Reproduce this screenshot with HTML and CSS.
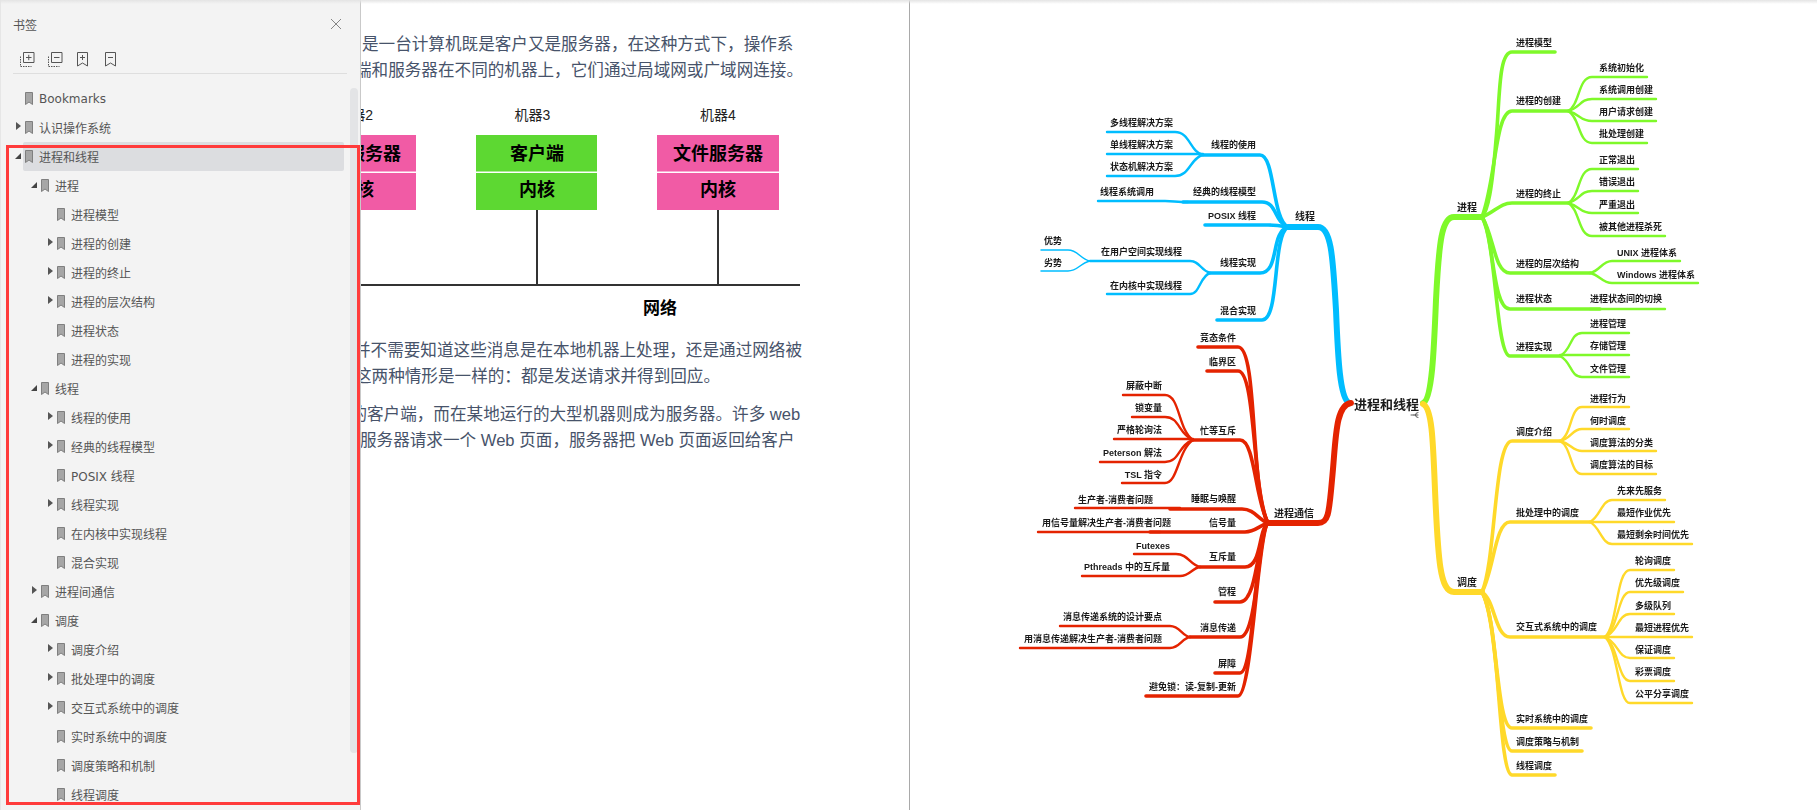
FILE: index.html
```html
<!DOCTYPE html>
<html lang="zh-CN">
<head>
<meta charset="utf-8">
<title>书签</title>
<link rel="stylesheet" href="styles.css">
</head>
<body>
<div class="app">
  <aside class="sidebar">
    <header class="side-head">
      <span>书签</span>
      <svg class="close" viewBox="0 0 10 10"><path d="M0 0L10 10M10 0L0 10"/></svg>
    </header>
    <div class="tools">
      <svg class="tool" viewBox="0 0 15 15"><path class="solid" d="M3.5.5h10.5v10h-10.5z"/><path class="dash" d="M.5 4.5v10h11"/><path class="solid" d="M6 5.5h5.500M8.750 2.800v5.400"/></svg>
      <svg class="tool" viewBox="0 0 15 15"><path class="solid" d="M3.500.5h10.500v10h-10.500z"/><path class="dash" d="M.5 4.500v10h11"/><path class="solid" d="M6 5.500h5.500"/></svg>
      <svg class="tool narrow" viewBox="0 0 11 15"><path class="solid" d="M.5.5h10v13.500l-5-3-5 3z"/><path class="solid" d="M3 5.500h5M5.500 3v5"/></svg>
      <svg class="tool narrow" viewBox="0 0 11 15"><path class="solid" d="M.5.5h10v13.500l-5-3-5 3z"/><path class="solid" d="M3 5.500h5"/></svg>
    </div>
    <nav class="tree">
      <div class="row l0"><i class="arrow"></i><div class="label"><svg class="mark" viewBox="0 0 8 13"><path d="M.5.500h7v12l-3.500-2.500-3.500 2.500z"/></svg><span>Bookmarks</span></div></div>
      <div class="row l0"><i class="arrow closed"></i><div class="label"><svg class="mark" viewBox="0 0 8 13"><path d="M.5.500h7v12l-3.500-2.500-3.500 2.500z"/></svg><span>认识操作系统</span></div></div>
      <div class="row l0"><i class="arrow open"></i><div class="label sel"><svg class="mark" viewBox="0 0 8 13"><path d="M.5.500h7v12l-3.500-2.500-3.500 2.500z"/></svg><span>进程和线程</span></div></div>
      <div class="row l1"><i class="arrow open"></i><div class="label"><svg class="mark" viewBox="0 0 8 13"><path d="M.5.500h7v12l-3.500-2.500-3.500 2.500z"/></svg><span>进程</span></div></div>
      <div class="row l2"><i class="arrow"></i><div class="label"><svg class="mark" viewBox="0 0 8 13"><path d="M.5.500h7v12l-3.500-2.500-3.500 2.500z"/></svg><span>进程模型</span></div></div>
      <div class="row l2"><i class="arrow closed"></i><div class="label"><svg class="mark" viewBox="0 0 8 13"><path d="M.5.500h7v12l-3.500-2.500-3.500 2.500z"/></svg><span>进程的创建</span></div></div>
      <div class="row l2"><i class="arrow closed"></i><div class="label"><svg class="mark" viewBox="0 0 8 13"><path d="M.5.500h7v12l-3.500-2.500-3.500 2.500z"/></svg><span>进程的终止</span></div></div>
      <div class="row l2"><i class="arrow closed"></i><div class="label"><svg class="mark" viewBox="0 0 8 13"><path d="M.5.500h7v12l-3.500-2.500-3.500 2.500z"/></svg><span>进程的层次结构</span></div></div>
      <div class="row l2"><i class="arrow"></i><div class="label"><svg class="mark" viewBox="0 0 8 13"><path d="M.5.500h7v12l-3.500-2.500-3.500 2.500z"/></svg><span>进程状态</span></div></div>
      <div class="row l2"><i class="arrow"></i><div class="label"><svg class="mark" viewBox="0 0 8 13"><path d="M.5.500h7v12l-3.500-2.500-3.500 2.500z"/></svg><span>进程的实现</span></div></div>
      <div class="row l1"><i class="arrow open"></i><div class="label"><svg class="mark" viewBox="0 0 8 13"><path d="M.5.500h7v12l-3.500-2.500-3.500 2.500z"/></svg><span>线程</span></div></div>
      <div class="row l2"><i class="arrow closed"></i><div class="label"><svg class="mark" viewBox="0 0 8 13"><path d="M.5.500h7v12l-3.500-2.500-3.500 2.500z"/></svg><span>线程的使用</span></div></div>
      <div class="row l2"><i class="arrow closed"></i><div class="label"><svg class="mark" viewBox="0 0 8 13"><path d="M.5.500h7v12l-3.500-2.500-3.500 2.500z"/></svg><span>经典的线程模型</span></div></div>
      <div class="row l2"><i class="arrow"></i><div class="label"><svg class="mark" viewBox="0 0 8 13"><path d="M.5.500h7v12l-3.500-2.500-3.500 2.500z"/></svg><span>POSIX 线程</span></div></div>
      <div class="row l2"><i class="arrow closed"></i><div class="label"><svg class="mark" viewBox="0 0 8 13"><path d="M.5.500h7v12l-3.500-2.500-3.500 2.500z"/></svg><span>线程实现</span></div></div>
      <div class="row l2"><i class="arrow"></i><div class="label"><svg class="mark" viewBox="0 0 8 13"><path d="M.5.500h7v12l-3.500-2.500-3.500 2.500z"/></svg><span>在内核中实现线程</span></div></div>
      <div class="row l2"><i class="arrow"></i><div class="label"><svg class="mark" viewBox="0 0 8 13"><path d="M.5.500h7v12l-3.500-2.500-3.500 2.500z"/></svg><span>混合实现</span></div></div>
      <div class="row l1"><i class="arrow closed"></i><div class="label"><svg class="mark" viewBox="0 0 8 13"><path d="M.5.500h7v12l-3.500-2.500-3.500 2.500z"/></svg><span>进程间通信</span></div></div>
      <div class="row l1"><i class="arrow open"></i><div class="label"><svg class="mark" viewBox="0 0 8 13"><path d="M.5.500h7v12l-3.500-2.500-3.500 2.500z"/></svg><span>调度</span></div></div>
      <div class="row l2"><i class="arrow closed"></i><div class="label"><svg class="mark" viewBox="0 0 8 13"><path d="M.5.500h7v12l-3.500-2.500-3.500 2.500z"/></svg><span>调度介绍</span></div></div>
      <div class="row l2"><i class="arrow closed"></i><div class="label"><svg class="mark" viewBox="0 0 8 13"><path d="M.5.500h7v12l-3.500-2.500-3.500 2.500z"/></svg><span>批处理中的调度</span></div></div>
      <div class="row l2"><i class="arrow closed"></i><div class="label"><svg class="mark" viewBox="0 0 8 13"><path d="M.5.500h7v12l-3.500-2.500-3.500 2.500z"/></svg><span>交互式系统中的调度</span></div></div>
      <div class="row l2"><i class="arrow"></i><div class="label"><svg class="mark" viewBox="0 0 8 13"><path d="M.5.500h7v12l-3.500-2.500-3.500 2.500z"/></svg><span>实时系统中的调度</span></div></div>
      <div class="row l2"><i class="arrow"></i><div class="label"><svg class="mark" viewBox="0 0 8 13"><path d="M.5.500h7v12l-3.500-2.500-3.500 2.500z"/></svg><span>调度策略和机制</span></div></div>
      <div class="row l2"><i class="arrow"></i><div class="label"><svg class="mark" viewBox="0 0 8 13"><path d="M.5.500h7v12l-3.500-2.500-3.500 2.500z"/></svg><span>线程调度</span></div></div>
    </nav>
    <div class="scrollbar"></div>
    <div class="redbox"></div>
  </aside>

  <main class="page left">
    <div class="para first">
      <div class="line">是一台计算机既是客户又是服务器，在这种方式下，操作系</div>
      <div class="line off6">端和服务器在不同的机器上，它们通过局域网或广域网连接。</div>
    </div>
    <svg class="net" viewBox="361 100 448 225">
      <text class="lab" x="373" y="115" text-anchor="end">机器2</text>
      <text class="lab" x="532.500" y="115" text-anchor="middle">机器3</text>
      <text class="lab" x="718" y="115" text-anchor="middle">机器4</text>
      <rect class="pink" x="295" y="135" width="121" height="36.500"/>
      <rect class="pink" x="295" y="173" width="121" height="37"/>
      <rect class="lime" x="476" y="135" width="121" height="36.500"/>
      <rect class="lime" x="476" y="173" width="121" height="37"/>
      <rect class="pink" x="657" y="135" width="122" height="36.500"/>
      <rect class="pink" x="657" y="173" width="122" height="37"/>
      <text class="box" x="356" y="154" text-anchor="middle">文件服务器</text>
      <text class="box" x="356" y="190" text-anchor="middle">内核</text>
      <text class="box" x="537" y="154" text-anchor="middle">客户端</text>
      <text class="box" x="537" y="190" text-anchor="middle">内核</text>
      <text class="box" x="718" y="154" text-anchor="middle">文件服务器</text>
      <text class="box" x="718" y="190" text-anchor="middle">内核</text>
      <path class="wire" d="M537 210V285M718 210V285M361 285H800"/>
      <text class="netname" x="660" y="308" text-anchor="middle">网络</text>
    </svg>
    <div class="para second">
      <div class="line off7">并不需要知道这些消息是在本地机器上处理，还是通过网络被</div>
      <div class="line off6">这两种情形是一样的：都是发送请求并得到回应。</div>
    </div>
    <div class="para third">
      <div class="line off11">的客户端，而在某地运行的大型机器则成为服务器。许多 web</div>
      <div class="line off1">服务器请求一个 Web 页面，服务器把 Web 页面返回给客户</div>
    </div>
  </main>

  <main class="page right">
    <svg class="map" viewBox="910 0 907 810">
      <!-- blue -->
      <g class="b-blue">
        <path class="w5" d="M1288 227H1318C1332 227 1333 262 1336 310C1338 360 1340 398 1349 403"/>
        <path class="w3" d="M1203 155H1260C1275 155 1272 220 1288 227"/>
        <path class="w3" d="M1183 202H1262C1277 202 1274 222 1288 227"/>
        <path class="w3" d="M1205 225H1268C1276 225 1282 226 1288 227"/>
        <path class="w3" d="M1210 273H1260C1280 273 1270 232 1288 227"/>
        <path class="w3" d="M1217 320H1262C1280 320 1272 236 1288 227"/>
        <path class="w2" d="M1107 132H1175C1190 132 1190 152 1203 155"/>
        <path class="w2" d="M1107 154H1203"/>
        <path class="w2" d="M1107 176H1175C1190 176 1190 158 1203 155"/>
        <path class="w2" d="M1098 201H1165C1172 201 1178 202 1188 202"/>
        <path class="w2" d="M1090 261H1190C1200 261 1200 270 1210 273"/>
        <path class="w2" d="M1107 294H1190C1200 294 1200 276 1210 273"/>
        <path class="w1" d="M1041 250H1068C1078 250 1080 259 1090 261"/>
        <path class="w1" d="M1041 271H1068C1078 271 1080 263 1090 261"/>
      </g>
      <!-- red -->
      <g class="b-red">
        <path class="w5" d="M1351 403C1335 405 1336 440 1332 480C1329 515 1328 523 1318 523H1268"/>
        <path class="w3" d="M1198 347H1238C1258 347 1250 490 1268 523"/>
        <path class="w3" d="M1207 371H1238C1256 371 1252 490 1268 523"/>
        <path class="w3" d="M1193 440H1240C1255 440 1255 500 1268 523"/>
        <path class="w3" d="M1170 509H1242C1255 509 1258 520 1268 523"/>
        <path class="w3" d="M1150 532H1245C1255 532 1260 525 1268 523"/>
        <path class="w3" d="M1200 567H1245C1262 567 1258 530 1268 523"/>
        <path class="w3" d="M1215 602H1240C1258 602 1258 530 1268 523"/>
        <path class="w3" d="M1190 637H1240C1258 637 1258 530 1268 523"/>
        <path class="w3" d="M1215 673H1240C1255 673 1255 530 1268 523"/>
        <path class="w3" d="M1146 696H1238C1252 696 1258 530 1268 523"/>
        <path class="w2" d="M1123 395H1165C1180 395 1178 430 1193 440"/>
        <path class="w2" d="M1132 417H1165C1180 417 1178 434 1193 440"/>
        <path class="w2" d="M1114 439H1193"/>
        <path class="w2" d="M1100 462H1165C1180 462 1178 445 1193 440"/>
        <path class="w2" d="M1122 483H1165C1178 483 1178 450 1193 440"/>
        <path class="w2" d="M1075 508H1180"/>
        <path class="w2" d="M1038 532H1160"/>
        <path class="w2" d="M1134 554H1176C1188 554 1190 565 1200 567"/>
        <path class="w2" d="M1082 576H1180C1190 576 1192 568 1200 567"/>
        <path class="w2" d="M1060 626H1170C1180 626 1182 636 1190 637"/>
        <path class="w2" d="M1020 648H1170C1180 648 1182 638 1190 637"/>
      </g>
      <!-- green -->
      <g class="b-green">
        <path class="w5" d="M1423 403C1432 400 1434 350 1436 300C1439 240 1442 217 1454 217H1482"/>
        <path class="w3" d="M1555 52H1512C1498 52 1500 100 1496 140C1492 190 1488 210 1482 217"/>
        <path class="w3" d="M1568 111H1512C1495 111 1496 180 1482 217"/>
        <path class="w3" d="M1568 203H1512C1500 203 1495 212 1482 217"/>
        <path class="w3" d="M1590 273H1510C1494 273 1494 235 1482 217"/>
        <path class="w3" d="M1600 309H1510C1492 309 1494 235 1482 217"/>
        <path class="w3" d="M1560 356H1510C1496 356 1496 240 1482 217"/>
        <path class="w2" d="M1647 77H1592C1578 77 1580 105 1568 111"/>
        <path class="w2" d="M1656 99H1592C1580 99 1580 108 1568 111"/>
        <path class="w2" d="M1656 121H1592C1580 121 1580 114 1568 111"/>
        <path class="w2" d="M1647 143H1592C1578 143 1580 117 1568 111"/>
        <path class="w2" d="M1638 169H1592C1578 169 1580 197 1568 203"/>
        <path class="w2" d="M1638 191H1592C1580 191 1580 200 1568 203"/>
        <path class="w2" d="M1638 213H1592C1580 213 1580 206 1568 203"/>
        <path class="w2" d="M1665 236H1592C1578 236 1580 209 1568 203"/>
        <path class="w2" d="M1680 261H1612C1602 261 1600 271 1590 273"/>
        <path class="w2" d="M1698 283H1612C1602 283 1600 275 1590 273"/>
        <path class="w2" d="M1665 309H1590"/>
        <path class="w2" d="M1629 333H1582C1570 333 1572 350 1560 356"/>
        <path class="w2" d="M1629 355H1560"/>
        <path class="w2" d="M1629 377H1582C1570 377 1572 362 1560 356"/>
      </g>
      <!-- yellow -->
      <g class="b-yellow">
        <path class="w5" d="M1423 404C1432 408 1433 440 1435 490C1438 560 1440 592 1454 592H1482"/>
        <path class="w3" d="M1560 441H1512C1494 441 1496 560 1482 592"/>
        <path class="w3" d="M1590 522H1510C1495 522 1494 570 1482 592"/>
        <path class="w3" d="M1605 637H1510C1495 637 1495 600 1482 592"/>
        <path class="w3" d="M1591 728H1512C1496 728 1498 620 1482 592"/>
        <path class="w3" d="M1582 751H1512C1498 751 1498 620 1482 592"/>
        <path class="w3" d="M1555 775H1512C1498 775 1500 620 1482 592"/>
        <path class="w2" d="M1629 407H1582C1570 407 1572 435 1560 441"/>
        <path class="w2" d="M1629 429H1582C1572 429 1572 438 1560 441"/>
        <path class="w2" d="M1656 451H1582C1572 451 1572 444 1560 441"/>
        <path class="w2" d="M1656 474H1582C1570 474 1572 447 1560 441"/>
        <path class="w2" d="M1665 500H1612C1602 500 1600 517 1590 522"/>
        <path class="w2" d="M1674 522H1590"/>
        <path class="w2" d="M1692 544H1612C1602 544 1600 527 1590 522"/>
        <path class="w2" d="M1674 570H1630C1616 570 1618 625 1605 637"/>
        <path class="w2" d="M1683 592H1630C1618 592 1618 630 1605 637"/>
        <path class="w2" d="M1674 614H1630C1618 614 1618 632 1605 637"/>
        <path class="w2" d="M1692 637H1605"/>
        <path class="w2" d="M1674 658H1630C1618 658 1618 642 1605 637"/>
        <path class="w2" d="M1674 681H1630C1618 681 1618 645 1605 637"/>
        <path class="w2" d="M1692 703H1630C1618 703 1618 648 1605 637"/>
      </g>

      <text class="t13" x="1354" y="404">进程和线程</text>
      <path class="note" d="M1411 415h3M1418 412.500a2.500 2.500 0 1 0 0 5M1414 415h4"/>

      <text class="t10" x="1295" y="216">线程</text>
      <text class="t10" x="1274" y="513">进程通信</text>
      <text class="t10" x="1457" y="207">进程</text>
      <text class="t10" x="1457" y="582">调度</text>

      <g class="end">
        <text x="1256" y="145">线程的使用</text>
        <text x="1256" y="192">经典的线程模型</text>
        <text x="1256" y="216">POSIX 线程</text>
        <text x="1256" y="263">线程实现</text>
        <text x="1256" y="311">混合实现</text>
        <text x="1173" y="123">多线程解决方案</text>
        <text x="1173" y="145">单线程解决方案</text>
        <text x="1173" y="167">状态机解决方案</text>
        <text x="1154" y="192">线程系统调用</text>
        <text x="1182" y="252">在用户空间实现线程</text>
        <text x="1182" y="286">在内核中实现线程</text>
        <text x="1062" y="241">优势</text>
        <text x="1062" y="263">劣势</text>

        <text x="1236" y="338">竞态条件</text>
        <text x="1236" y="362">临界区</text>
        <text x="1236" y="431">忙等互斥</text>
        <text x="1236" y="499">睡眠与唤醒</text>
        <text x="1236" y="523">信号量</text>
        <text x="1236" y="557">互斥量</text>
        <text x="1236" y="592">管程</text>
        <text x="1236" y="628">消息传递</text>
        <text x="1236" y="664">屏障</text>
        <text x="1236" y="687">避免锁：读-复制-更新</text>
        <text x="1162" y="386">屏蔽中断</text>
        <text x="1162" y="408">锁变量</text>
        <text x="1162" y="430">严格轮询法</text>
        <text x="1162" y="453">Peterson 解法</text>
        <text x="1162" y="475">TSL 指令</text>
        <text x="1153" y="500">生产者-消费者问题</text>
        <text x="1171" y="523">用信号量解决生产者-消费者问题</text>
        <text x="1170" y="546">Futexes</text>
        <text x="1170" y="567">Pthreads 中的互斥量</text>
        <text x="1162" y="617">消息传递系统的设计要点</text>
        <text x="1162" y="639">用消息传递解决生产者-消费者问题</text>
      </g>

      <g class="start">
        <text x="1516" y="43">进程模型</text>
        <text x="1516" y="101">进程的创建</text>
        <text x="1516" y="194">进程的终止</text>
        <text x="1516" y="264">进程的层次结构</text>
        <text x="1516" y="299">进程状态</text>
        <text x="1516" y="347">进程实现</text>
        <text x="1599" y="68">系统初始化</text>
        <text x="1599" y="90">系统调用创建</text>
        <text x="1599" y="112">用户请求创建</text>
        <text x="1599" y="134">批处理创建</text>
        <text x="1599" y="160">正常退出</text>
        <text x="1599" y="182">错误退出</text>
        <text x="1599" y="205">严重退出</text>
        <text x="1599" y="227">被其他进程杀死</text>
        <text x="1617" y="253">UNIX 进程体系</text>
        <text x="1617" y="275">Windows 进程体系</text>
        <text x="1590" y="299">进程状态间的切换</text>
        <text x="1590" y="324">进程管理</text>
        <text x="1590" y="346">存储管理</text>
        <text x="1590" y="369">文件管理</text>

        <text x="1516" y="432">调度介绍</text>
        <text x="1516" y="513">批处理中的调度</text>
        <text x="1516" y="627">交互式系统中的调度</text>
        <text x="1516" y="719">实时系统中的调度</text>
        <text x="1516" y="742">调度策略与机制</text>
        <text x="1516" y="766">线程调度</text>
        <text x="1590" y="399">进程行为</text>
        <text x="1590" y="421">何时调度</text>
        <text x="1590" y="443">调度算法的分类</text>
        <text x="1590" y="465">调度算法的目标</text>
        <text x="1617" y="491">先来先服务</text>
        <text x="1617" y="513">最短作业优先</text>
        <text x="1617" y="535">最短剩余时间优先</text>
        <text x="1635" y="561">轮询调度</text>
        <text x="1635" y="583">优先级调度</text>
        <text x="1635" y="606">多级队列</text>
        <text x="1635" y="628">最短进程优先</text>
        <text x="1635" y="650">保证调度</text>
        <text x="1635" y="672">彩票调度</text>
        <text x="1635" y="694">公平分享调度</text>
      </g>
    </svg>
  </main>
</div>
<div class="topshade"></div>
</body>
</html>
```

FILE: styles.css
```css
* { box-sizing: border-box; }
html, body { margin: 0; height: 100%; overflow: hidden; background: #fff; }
body { font-family: "Liberation Sans", "Noto Sans CJK SC", sans-serif; }

.app { display: flex; width: 1817px; height: 810px; }

/* sidebar */
.sidebar {
  position: relative;
  flex: 0 0 361px;
  height: 810px;
  background: #f3f3f3;
  border-left: 1px solid #e6e6e6;
  border-right: 1px solid #c9c9c9;
  display: flex;
  flex-direction: column;
  font-family: "DejaVu Sans", "Noto Sans CJK SC", sans-serif;
  color: #555;
  overflow: hidden;
}
.side-head {
  flex: 0 0 48px;
  display: flex;
  align-items: center;
  justify-content: space-between;
  padding: 0 19px 0 12px;
  font-size: 12px;
  color: #555;
}
.close { width: 10px; height: 10px; }
.close path { stroke: #858585; stroke-width: 1; fill: none; }
.tools {
  flex: 0 0 26px;
  margin: 0 13px 0 12px;
  padding: 4px 0 0 7px;
  display: flex;
  align-items: flex-start;
  gap: 13px;
  border-bottom: 1px solid #dedede;
}
.tool { width: 15px; height: 15px; fill: none; }
.tool.narrow { width: 11px; margin-left: 1px; margin-right: 3px; }
.solid { stroke: #555; stroke-width: 1; fill: none; }
.dash { stroke: #555; stroke-width: 1; fill: none; stroke-dasharray: 1.500 1; }

.tree { margin-top: 10px; flex: 1; overflow: hidden; }
.row {
  display: flex;
  align-items: stretch;
  height: 29px;
  padding-right: 16px;
  font-size: 12px;
}
.row.l0 { padding-left: 14px; }
.row.l1 { padding-left: 30px; }
.row.l2 { padding-left: 46px; }
.arrow {
  flex: 0 0 8px;
  position: relative;
  display: block;
}
.arrow.closed::before {
  content: "";
  position: absolute;
  left: 1px;
  top: 9px;
  border-left: 5px solid #555;
  border-top: 4px solid transparent;
  border-bottom: 4px solid transparent;
}
.arrow.open::before {
  content: "";
  position: absolute;
  left: 0;
  top: 11px;
  border-right: 6px solid #444;
  border-top: 6px solid transparent;
}
.label {
  flex: 1;
  display: flex;
  align-items: center;
  gap: 6px;
  padding-left: 2px;
  border-radius: 2px;
  letter-spacing: 0;
}
.label.sel { background: #dcdde0; }
.mark { width: 8px; height: 13px; flex: none; margin-top: -1px; }
.mark path { fill: #a6a6a6; stroke: #7f7f7f; stroke-width: 1; }

.scrollbar {
  position: absolute;
  left: 349px;
  top: 88px;
  width: 8px;
  height: 665px;
  background: #e3e4e6;
  border-radius: 4px;
}
.redbox {
  position: absolute;
  left: 5px;
  top: 145px;
  width: 354px;
  height: 660px;
  border: 3px solid #ff3b3b;
}

/* pages */
.page { height: 810px; background: #fff; overflow: hidden; }
.page.left {
  flex: 0 0 549px;
  padding-top: 32px;
  border-right: 1px solid #a9a9a9;
  color: #47536a;
  font-size: 16.600px;
}
.page.right { flex: 1; }
.line { line-height: 26px; height: 26px; white-space: nowrap; margin-left: 1px; }
.off1 { margin-left: -1px; }
.off6 { margin-left: -6px; }
.off7 { margin-left: -7px; }
.off11 { margin-left: -10.600px; }
.net { display: block; width: 448px; height: 225px; margin-top: 16px; }
.para.second { margin-top: 13px; }
.para.third { margin-top: 12px; }
.lab { font-size: 14px; fill: #222; dominant-baseline: central; }
.box { font-size: 18px; font-weight: 700; fill: #000; dominant-baseline: central; }
.netname { font-size: 17px; font-weight: 700; fill: #000; dominant-baseline: central; }
.pink { fill: #f15ba5; }
.lime { fill: #5dd832; }
.wire { stroke: #333; stroke-width: 2; fill: none; }

/* mind map */
.map { display: block; width: 907px; height: 810px; filter: blur(0.3px); }
.map path { fill: none; stroke-linecap: round; }
.b-blue path { stroke: #00bdff; }
.b-red path { stroke: #e42300; }
.b-green path { stroke: #7ff92a; }
.b-yellow path { stroke: #ffd92a; }
.w5 { stroke-width: 6; }
.w3 { stroke-width: 3.600; }
.w2 { stroke-width: 2.400; }
.w1 { stroke-width: 1.500; }
.map text {
  font-family: "Liberation Sans", "Noto Sans CJK SC", sans-serif;
  font-size: 9px;
  font-weight: 700;
  fill: #1a1a1a;
  dominant-baseline: central;
}
.map .t13 { font-size: 13px; }
.map .t10 { font-size: 10px; }
.end text { text-anchor: end; }
.start text { text-anchor: start; }
.map .note { stroke: #333; stroke-width: 0.800; fill: none; }

.topshade {
  position: absolute;
  left: 0;
  top: 0;
  width: 100%;
  height: 4px;
  background: linear-gradient(#e4e4e4, rgba(240, 240, 240, 0));
}
```
